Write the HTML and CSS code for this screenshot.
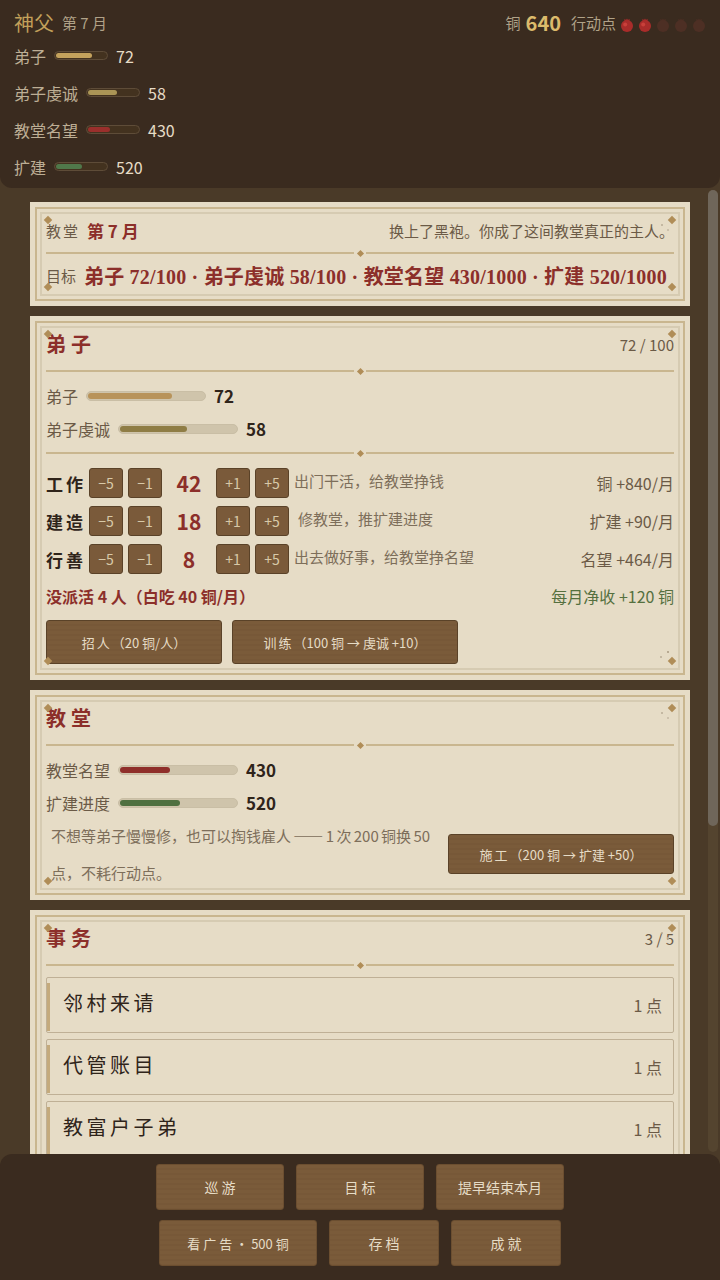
FILE: index.html
```html
<!DOCTYPE html>
<html lang="zh-CN">
<head>
  <meta charset="UTF-8">
  <meta name="viewport" content="width=device-width, initial-scale=1.0">
  <title>神父</title>
  <link rel="stylesheet" href="styles.css">
</head>
<body>
  <div class="app">
    <header class="top-bar">
      <div class="top-head">
        <div class="top-title"><span class="role-name">神父</span><span class="role-month">第 7 月</span></div>
        <div class="top-res">
          <span>铜</span><strong class="coin">640</strong><span>行动点</span>
          <span class="ap-list">
            <svg class="ap on" viewBox="0 0 14 14"><path d="M4.6 3.4 4.4.8 6 1.9 7 .6 8 1.9 9.6.8 9.4 3.4z"/><circle cx="7" cy="8" r="6"/><circle class="ap-shine" cx="5.2" cy="6.6" r="2"/></svg>
            <svg class="ap on" viewBox="0 0 14 14"><path d="M4.6 3.4 4.4.8 6 1.9 7 .6 8 1.9 9.6.8 9.4 3.4z"/><circle cx="7" cy="8" r="6"/><circle class="ap-shine" cx="5.2" cy="6.6" r="2"/></svg>
            <svg class="ap" viewBox="0 0 14 14"><path d="M4.6 3.4 4.4.8 6 1.9 7 .6 8 1.9 9.6.8 9.4 3.4z"/><circle cx="7" cy="8" r="6"/></svg>
            <svg class="ap" viewBox="0 0 14 14"><path d="M4.6 3.4 4.4.8 6 1.9 7 .6 8 1.9 9.6.8 9.4 3.4z"/><circle cx="7" cy="8" r="6"/></svg>
            <svg class="ap" viewBox="0 0 14 14"><path d="M4.6 3.4 4.4.8 6 1.9 7 .6 8 1.9 9.6.8 9.4 3.4z"/><circle cx="7" cy="8" r="6"/></svg>
          </span>
        </div>
      </div>
      <div class="top-stat"><span>弟子</span><div class="mini-bar"><div class="fill gold" style="width:72%"></div></div><b>72</b></div>
      <div class="top-stat"><span>弟子虔诚</span><div class="mini-bar"><div class="fill olive" style="width:58%"></div></div><b>58</b></div>
      <div class="top-stat"><span>教堂名望</span><div class="mini-bar"><div class="fill red" style="width:43%"></div></div><b>430</b></div>
      <div class="top-stat"><span>扩建</span><div class="mini-bar"><div class="fill green" style="width:52%"></div></div><b>520</b></div>
    </header>

    <main class="scroll">
      <section class="card card-intro">
        <i class="gem tl"></i><i class="gem tr"></i><i class="gem bl"></i><i class="gem br"></i><i class="spark spark-top"></i>
        <div class="intro-row">
          <span class="muted spaced">教堂</span><strong class="month">第 7 月</strong>
          <span class="intro-note">换上了黑袍。你成了这间教堂真正的主人。</span>
        </div>
        <div class="rule"><i></i></div>
        <div class="goal-row"><span class="muted">目标</span><strong class="goal">弟子 72/100 · 弟子虔诚 58/100 · 教堂名望 430/1000 · 扩建 520/1000</strong></div>
      </section>

      <section class="card">
        <i class="gem tl"></i><i class="gem tr"></i><i class="gem bl"></i><i class="gem br"></i><i class="spark spark-bottom"></i>
        <div class="card-head"><h2>弟子</h2><span class="count">72 / 100</span></div>
        <div class="rule"><i></i></div>
        <div class="stat-row"><span>弟子</span><div class="bar"><div class="fill gold" style="width:72%"></div></div><b>72</b></div>
        <div class="stat-row"><span>弟子虔诚</span><div class="bar"><div class="fill olive" style="width:58%"></div></div><b>58</b></div>
        <div class="rule rule-low"><i></i></div>
        <div class="job">
          <span class="job-name">工作</span>
          <button class="step">−5</button><button class="step">−1</button>
          <b class="job-num">42</b>
          <button class="step">+1</button><button class="step">+5</button>
          <span class="job-desc">出门干活，给教堂挣钱</span>
          <span class="job-gain">铜 +840/月</span>
        </div>
        <div class="job">
          <span class="job-name">建造</span>
          <button class="step">−5</button><button class="step">−1</button>
          <b class="job-num">18</b>
          <button class="step">+1</button><button class="step">+5</button>
          <span class="job-desc job-desc-in">修教堂，推扩建进度</span>
          <span class="job-gain">扩建 +90/月</span>
        </div>
        <div class="job">
          <span class="job-name">行善</span>
          <button class="step">−5</button><button class="step">−1</button>
          <b class="job-num">8</b>
          <button class="step">+1</button><button class="step">+5</button>
          <span class="job-desc">出去做好事，给教堂挣名望</span>
          <span class="job-gain">名望 +464/月</span>
        </div>
        <div class="summary"><strong>没派活 4 人（白吃 40 铜/月）</strong><span>每月净收 +120 铜</span></div>
        <div class="actions">
          <button class="wood wood-recruit"><span class="sp">招人</span>（20 铜/人）</button>
          <button class="wood wood-train"><span class="sp">训练</span>（100 铜 → 虔诚 +10）</button>
        </div>
      </section>

      <section class="card">
        <i class="gem tl"></i><i class="gem tr"></i><i class="gem bl"></i><i class="gem br"></i><i class="spark spark-top"></i>
        <div class="card-head"><h2>教堂</h2></div>
        <div class="rule"><i></i></div>
        <div class="stat-row"><span>教堂名望</span><div class="bar"><div class="fill red" style="width:43%"></div></div><b>430</b></div>
        <div class="stat-row"><span>扩建进度</span><div class="bar"><div class="fill green" style="width:52%"></div></div><b>520</b></div>
        <div class="build">
          <p>不想等弟子慢慢修，也可以掏钱雇人 —— 1 次 200 铜换 50 点，不耗行动点。</p>
          <button class="wood wood-build"><span class="sp">施工</span>（200 铜 → 扩建 +50）</button>
        </div>
      </section>

      <section class="card card-tasks">
        <i class="gem tl"></i><i class="gem tr"></i><i class="spark spark-top"></i>
        <div class="card-head"><h2>事务</h2><span class="count">3 / 5</span></div>
        <div class="rule"><i></i></div>
        <div class="task"><span>邻村来请</span><em>1 点</em></div>
        <div class="task"><span>代管账目</span><em>1 点</em></div>
        <div class="task"><span>教富户子弟</span><em>1 点</em></div>
      </section>
    </main>

    <footer class="bottom-bar">
      <div class="bottom-row">
        <button class="nav nav-m"><span class="sp">巡游</span></button>
        <button class="nav nav-m"><span class="sp">目标</span></button>
        <button class="nav nav-m">提早结束本月</button>
      </div>
      <div class="bottom-row">
        <button class="nav nav-l"><span class="sp">看广告</span> · 500 铜</button>
        <button class="nav nav-s"><span class="sp">存档</span></button>
        <button class="nav nav-s"><span class="sp">成就</span></button>
      </div>
    </footer>
  </div>
</body>
</html>
```
FILE: styles.css
```css
html, body {
  margin: 0;
  padding: 0;
  height: 100%;
}
body {
  background: #4a3a28;
  font-family: "Noto Sans CJK SC", "Noto Sans", sans-serif;
  color: #2f241a;
}
button {
  font-family: inherit;
  cursor: pointer;
}
.app {
  position: relative;
  width: 720px;
  height: 1280px;
  overflow: hidden;
  display: flex;
  flex-direction: column;
}

/* top bar */
.top-bar {
  height: 188px;
  box-sizing: border-box;
  padding: 8px 14px 0;
  background: #3a2b1f;
  border-radius: 0 0 12px 12px;
  color: #bdae95;
  font-size: 16px;
}
.top-head {
  display: flex;
  justify-content: space-between;
  align-items: center;
  height: 29px;
}
.top-title {
  display: flex;
  align-items: center;
  gap: 8px;
}
.role-name {
  font-size: 20px;
  color: #c2a05a;
}
.role-month {
  font-size: 15px;
  color: #b0a288;
}
.top-res {
  display: flex;
  align-items: center;
  font-size: 15px;
  color: #b0a288;
}
.coin {
  margin: 0 10px 0 5px;
  font-size: 20px;
  color: #dcbb6c;
}
.ap-list {
  display: flex;
  gap: 4px;
  margin: 4px 0 0 4px;
}
.ap {
  width: 14px;
  height: 14px;
  fill: #4d2f24;
}
.ap.on {
  fill: #a92c2a;
}
.ap-shine {
  fill: #c9403a;
}
.top-stat {
  display: flex;
  align-items: center;
  gap: 8px;
  height: 37px;
}
.top-stat b {
  font-weight: 400;
  color: #e6dcc6;
}
.mini-bar {
  width: 54px;
  height: 9px;
  box-sizing: border-box;
  padding: 1px;
  border: 1px solid #5e4c38;
  border-radius: 5px;
  background: #43321f;
}
.fill {
  height: 100%;
  border-radius: 3px;
}
.fill.gold { background: #c4a25c; }
.fill.olive { background: #ab9556; }
.fill.red { background: #9a2f2c; }
.fill.green { background: #50784a; }

/* main scrolling column */
.scroll {
  flex: 1;
  padding: 14px 0 0 30px;
  position: relative;
  display: flex;
  flex-direction: column;
  gap: 10px;
  overflow: hidden;
}
.scroll::before {
  content: "";
  position: absolute;
  top: 2px;
  right: 2px;
  width: 10px;
  height: 962px;
  border-radius: 5px;
  background: #54442f;
}
.scroll::after {
  content: "";
  position: absolute;
  top: 2px;
  right: 2px;
  width: 10px;
  height: 636px;
  border-radius: 5px;
  background: #6f665a;
}
.card {
  position: relative;
  flex: none;
  width: 660px;
  box-sizing: border-box;
  padding: 12px 16px;
  background: #e6dcc6;
}
.card::before {
  content: "";
  position: absolute;
  inset: 5px;
  border: 2px solid #c9b68f;
  pointer-events: none;
}
.card::after {
  content: "";
  position: absolute;
  inset: 10px;
  border: 2px solid #d6cbb2;
  pointer-events: none;
}
.gem {
  position: absolute;
  width: 6px;
  height: 6px;
  background: #b08d57;
  transform: rotate(45deg);
  z-index: 1;
}
.gem.tl { top: 15px; left: 15px; }
.gem.tr { top: 15px; right: 15px; }
.gem.bl { bottom: 16px; left: 15px; }
.gem.br { bottom: 16px; right: 15px; }

/* faint dust next to a corner */
.spark {
  position: absolute;
  width: 2px;
  height: 2px;
  border-radius: 50%;
  background: #b9ad96;
}
.spark-top {
  top: 22px;
  right: 27px;
  box-shadow: 6px 5px 0 #c4b9a3;
}
.spark-bottom {
  bottom: 22px;
  right: 28px;
  box-shadow: 7px -5px 0 #a89a80;
}

.rule {
  display: flex;
  align-items: center;
  height: 2px;
  background: linear-gradient(to right, #c9b68f 308px, transparent 308px, transparent 320px, #c9b68f 320px);
  justify-content: center;
}
.rule i {
  width: 5px;
  height: 5px;
  background: #b08d57;
  transform: rotate(45deg);
}
.muted {
  color: #6b5a46;
}

/* intro card */
.card-intro {
  height: 104px;
  padding-top: 16px;
}
.intro-row {
  display: flex;
  align-items: center;
  height: 24px;
  margin-bottom: 10px;
  font-size: 15px;
}
.spaced {
  letter-spacing: 2px;
}
.month {
  margin-left: 7px;
  font-size: 17px;
  color: #8c2f2a;
}
.intro-note {
  margin-left: auto;
  color: #6b5a46;
}
.goal-row {
  display: flex;
  align-items: center;
  gap: 8px;
  margin-top: 7px;
  font-size: 15px;
  white-space: nowrap;
}
.goal {
  font-family: "Liberation Serif", "Noto Sans CJK SC", serif;
  font-size: 20px;
  letter-spacing: .2px;
  color: #8c2f2a;
}

/* section cards */
.card-head {
  display: flex;
  align-items: center;
  justify-content: space-between;
  height: 30px;
  margin-bottom: 12px;
}
.card-head h2 {
  margin: 0;
  padding-top: 1px;
  font-size: 20px;
  letter-spacing: 5px;
  color: #8c2f2a;
}
.count {
  padding-top: 2px;
  font-size: 15px;
  color: #6b5a46;
}
.stat-row {
  display: flex;
  align-items: center;
  gap: 8px;
  height: 33px;
  font-size: 16px;
  color: #6b5a46;
}
.rule + .stat-row {
  margin-top: 7px;
}
.stat-row b {
  font-size: 17px;
  color: #2f241a;
}
.bar {
  width: 120px;
  height: 10px;
  box-sizing: border-box;
  padding: 1px;
  border: 1px solid #c9bea5;
  border-radius: 5px;
  background: #cfc4ab;
}
.bar .fill.gold { background: #b8935a; }
.bar .fill.olive { background: #8f7d45; }
.bar .fill.red { background: #8f2f2a; }
.bar .fill.green { background: #4f7040; }
.rule-low {
  margin: 7px 0 10px;
}
.job {
  display: flex;
  align-items: center;
  height: 38px;
  font-size: 16px;
}
.job-name {
  width: 43px;
  font-size: 17px;
  font-weight: 700;
  letter-spacing: 3px;
  color: #2f241a;
}
.step {
  width: 34px;
  height: 30px;
  padding: 0;
  margin-right: 5px;
  border: 1px solid #5a4228;
  border-radius: 3px;
  background: #7a5a3a;
  color: #d8c9a8;
  font-size: 14px;
}
.job-num {
  width: 44px;
  margin-right: 5px;
  text-align: center;
  font-size: 21px;
  color: #8c2f2a;
}
.job-desc {
  margin-bottom: 6px;
  font-size: 15px;
  color: #7d6e5a;
}
.job-desc-in {
  margin-left: 4px;
}
.job-gain {
  margin-left: auto;
  color: #6b5a46;
}
.summary {
  display: flex;
  justify-content: space-between;
  align-items: center;
  height: 36px;
  font-size: 16px;
}
.summary strong {
  color: #8c2f2a;
}
.summary span {
  color: #55703f;
}
.actions {
  display: flex;
  gap: 10px;
  margin-top: 6px;
  padding-bottom: 4px;
}
.wood {
  height: 44px;
  padding: 0;
  border: 1px solid #5a4228;
  border-radius: 3px;
  background: repeating-linear-gradient(to bottom, #7a5b3a 0, #7a5b3a 3px, #775838 3px, #775838 5px);
  color: #e6dcc6;
  font-size: 13px;
}
.sp {
  letter-spacing: 2px;
}
.wood-recruit { width: 176px; }
.wood-train { width: 226px; }
.wood-build {
  flex: none;
  width: 226px;
  height: 40px;
}
.build {
  display: flex;
  align-items: center;
  gap: 16px;
  margin: -2px 0 -3px;
}
.build p {
  margin: 0;
  padding-left: 5px;
  font-size: 15px;
  line-height: 37px;
  word-spacing: -1px;
  color: #7d6e5a;
}
.card-tasks {
  padding-bottom: 30px;
}
.task {
  position: relative;
  display: flex;
  align-items: center;
  justify-content: space-between;
  height: 56px;
  box-sizing: border-box;
  margin-bottom: 6px;
  padding: 0 11px 0 16px;
  border: 1px solid #bfb096;
  border-radius: 2px;
}
.rule + .task {
  margin-top: 11px;
}
.task::before {
  content: "";
  position: absolute;
  left: 0;
  top: 5px;
  bottom: 1px;
  width: 3px;
  background: #c4aa7c;
}
.task span {
  padding-bottom: 6px;
  font-size: 20px;
  letter-spacing: 3.5px;
  color: #2f241a;
}
.task em {
  font-style: normal;
  font-size: 16px;
  color: #6b5a46;
}

/* bottom bar */
.bottom-bar {
  position: absolute;
  left: 0;
  right: 0;
  bottom: 0;
  height: 126px;
  box-sizing: border-box;
  padding-top: 10px;
  background: #3a2b1f;
  border-radius: 12px 12px 0 0;
  display: flex;
  flex-direction: column;
  gap: 10px;
  z-index: 2;
}
.bottom-row {
  display: flex;
  justify-content: center;
  gap: 12px;
}
.nav {
  height: 46px;
  padding: 0;
  border: 1px solid #6b4e30;
  border-radius: 3px;
  background: repeating-linear-gradient(to bottom, #7a5b3a 0, #7a5b3a 3px, #775838 3px, #775838 5px);
  color: #e6dcc6;
  font-size: 14px;
}
.nav .sp {
  letter-spacing: 3px;
  margin-right: -3px;
}
.nav-m { width: 128px; }
.nav-l {
  width: 158px;
  font-size: 13px;
}
.nav-s { width: 110px; }
```
